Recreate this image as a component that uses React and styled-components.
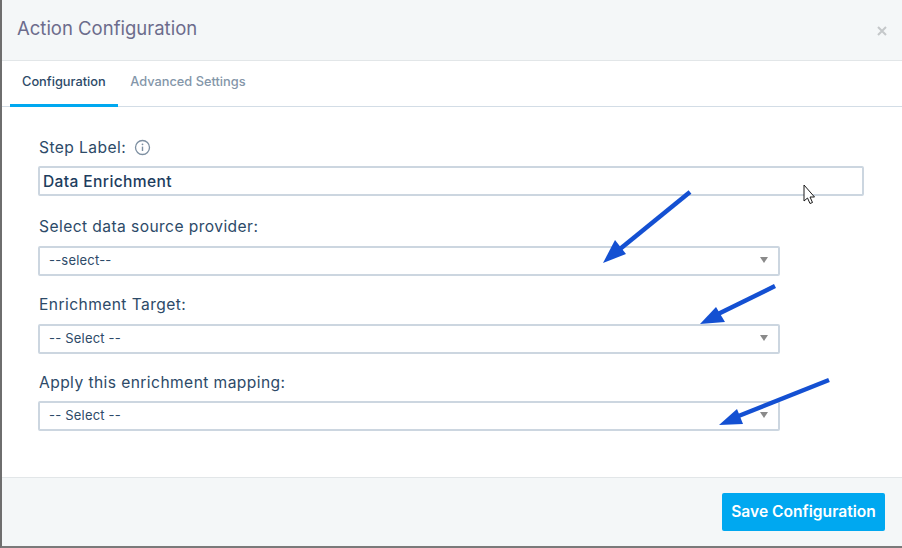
import React from "react";
import styled, { createGlobalStyle } from "styled-components";

const GlobalStyle = createGlobalStyle`
  html, body {
    margin: 0;
    padding: 0;
    background: #fff;
  }
  * {
    box-sizing: border-box;
  }
`;

const Modal = styled.div`
  position: relative;
  width: 902px;
  height: 548px;
  display: flex;
  flex-direction: column;
  overflow: hidden;
  background: #fff;
  border-left: 2px solid #6e6e6e;
  border-bottom: 2px solid #7a7a7a;
  font-family: Inter, "Liberation Sans", sans-serif;
`;

const Header = styled.header`
  height: 61px;
  flex: none;
  display: flex;
  align-items: center;
  justify-content: space-between;
  padding: 0 15px 4px 15px;
  background: #f4f7f8;
  border-bottom: 1px solid #e2e6e8;
`;

const Title = styled.h1`
  margin: 0;
  font-size: 18.5px;
  font-weight: 400;
  color: #6c6c8c;
`;

const Close = styled.span`
  display: flex;
  margin-top: 6px;
  color: #c4c8ca;
`;

const Tabs = styled.nav`
  height: 46px;
  flex: none;
  display: flex;
  padding-left: 8px;
  border-bottom: 1px solid #d3dde6;
`;

const Tab = styled.div`
  height: 46px;
  padding: 0 12.5px 2px 12px;
  display: flex;
  align-items: center;
  font-size: 12.8px;
  font-weight: 500;
  color: ${(p) => (p.$active ? "#2d4a68" : "#8496a9")};
  border-bottom: 3px solid ${(p) => (p.$active ? "#00a8f0" : "transparent")};
`;

const Body = styled.main`
  flex: 1;
  display: flex;
  flex-direction: column;
  padding: 30px 36px 0;
`;

const Label = styled.label`
  display: flex;
  align-items: center;
  gap: 8px;
  height: 20px;
  padding-left: 1px;
  font-size: 15.6px;
  color: #2d4a68;
  letter-spacing: 0.42px;
`;

const Field = styled.div`
  display: flex;
  flex-direction: column;
  gap: ${(p) => p.$gap}px;
  margin-bottom: ${(p) => p.$mb}px;
`;

const TextBox = styled.div`
  width: 826px;
  height: 30px;
  display: flex;
  align-items: center;
  padding-left: 3px;
  border: 2px solid #ccd6e0;
  border-radius: 2px;
  font-size: 15.6px;
  font-weight: 500;
  letter-spacing: 0.36px;
  color: #1d3d5e;
`;

const SelectBox = styled.div`
  width: 742px;
  height: 30px;
  display: flex;
  align-items: center;
  justify-content: space-between;
  padding: 0 9px 2px;
  border: 2px solid #ccd6e0;
  border-radius: 2px;
  font-size: 13px;
  letter-spacing: 0.2px;
  color: #2d4a68;
`;

const Caret = styled.span`
  width: 0;
  height: 0;
  margin-right: 1px;
  border-left: 4px solid transparent;
  border-right: 4px solid transparent;
  border-top: 6px solid #8a8a8a;
`;

const Footer = styled.footer`
  height: 69px;
  flex: none;
  display: flex;
  align-items: flex-start;
  justify-content: flex-end;
  padding: 15px 17px 0 0;
  background: #f4f7f8;
  border-top: 1px solid #e2e6e8;
`;

const SaveButton = styled.button`
  width: 163px;
  height: 38px;
  padding: 0 0 2px;
  border: 0;
  border-radius: 2px;
  background: #00a8f0;
  color: #fff;
  font-family: inherit;
  font-size: 15.6px;
  font-weight: 600;
`;

const Overlay = styled.svg`
  position: absolute;
  left: -2px;
  top: 0;
  pointer-events: none;
`;

const InfoIcon = () => (
  <svg width="17" height="17" viewBox="0 0 17 17" fill="none">
    <circle cx="8.5" cy="8.5" r="7" stroke="#7d8fa1" strokeWidth="1.3" />
    <path d="M8.5 7.6v4.4" stroke="#7d8fa1" strokeWidth="1.4" />
    <circle cx="8.5" cy="5.3" r="0.9" fill="#7d8fa1" />
  </svg>
);

const CloseIcon = () => (
  <svg width="10" height="10" viewBox="0 0 10 10">
    <path d="M1 1l8 8M9 1l-8 8" stroke="currentColor" strokeWidth="2" />
  </svg>
);

const arrows = [
  { line: "M690 192L620 249", head: "M603 263L615 240L626 254Z" },
  { line: "M775 286L716 315", head: "M700 324L716 307L725 322Z" },
  { line: "M829 380L736 417", head: "M719 425L737 409L743 424Z" },
];

const selects = [
  { label: "Select data source provider:", value: "--select--", gap: 10, mb: 18 },
  { label: "Enrichment Target:", value: "-- Select --", gap: 10, mb: 18 },
  { label: "Apply this enrichment mapping:", value: "-- Select --", gap: 9, mb: 0 },
];

export default function App() {
  return (
    <>
      <GlobalStyle />
      <Modal>
        <Header>
          <Title>Action Configuration</Title>
          <Close>
            <CloseIcon />
          </Close>
        </Header>
        <Tabs>
          <Tab $active>Configuration</Tab>
          <Tab>Advanced Settings</Tab>
        </Tabs>
        <Body>
          <Field $gap={9} $mb={20}>
            <Label>
              Step Label: <InfoIcon />
            </Label>
            <TextBox>Data Enrichment</TextBox>
          </Field>
          {selects.map((s) => (
            <Field key={s.label} $gap={s.gap} $mb={s.mb}>
              <Label>{s.label}</Label>
              <SelectBox>
                {s.value}
                <Caret />
              </SelectBox>
            </Field>
          ))}
        </Body>
        <Footer>
          <SaveButton>Save Configuration</SaveButton>
        </Footer>
        <Overlay width="902" height="548" viewBox="0 0 902 548">
          {arrows.map((a) => (
            <g key={a.line}>
              <path d={a.line} stroke="#1450d2" strokeWidth="4.5" fill="none" />
              <path d={a.head} fill="#1450d2" />
            </g>
          ))}
          <path
            d="M804 185v16l3.5-3 2.5 5.5 2.5-1-2.5-5.5h4.5z"
            fill="#fff"
            stroke="#1a1a1a"
            strokeWidth="1"
          />
        </Overlay>
      </Modal>
    </>
  );
}
